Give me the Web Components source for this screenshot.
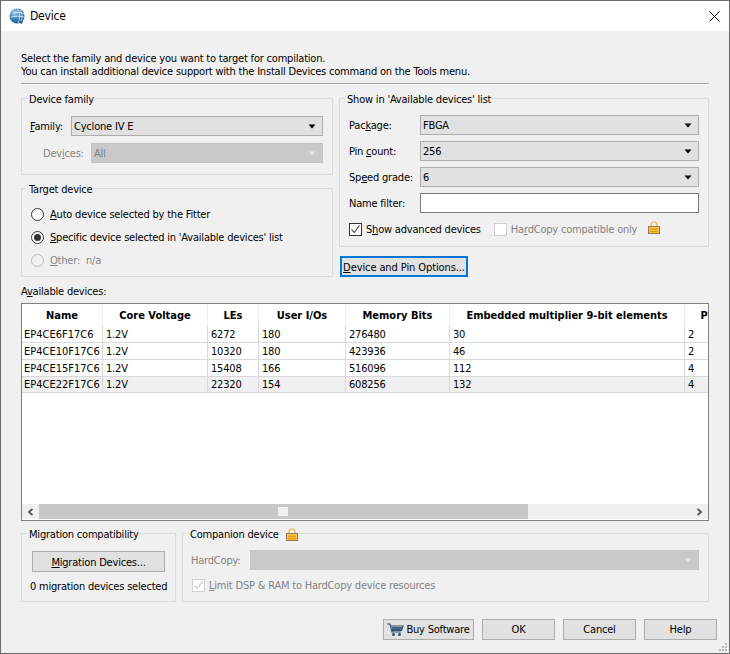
<!DOCTYPE html>
<html>
<head>
<meta charset="utf-8">
<title>Device</title>
<style>
  html, body { margin: 0; height: 100%; }
  body { font: 11px/13px "DejaVu Sans Condensed", "DejaVu Sans", sans-serif; letter-spacing: -0.2px; color: #000; background: #f0f0f0; }
</style>
</head>
<body>
<device-dialog></device-dialog>
<script>
class GroupBox extends HTMLElement {
  constructor() {
    super();
    this.attachShadow({ mode: "open" });
    this.shadowRoot.innerHTML = `
<style>
  :host { display: block; box-sizing: border-box; border: 1px solid #dcdcdc; }
  .legend { display: flex; align-items: center; gap: 7px; width: max-content; height: 13px; margin: -6px 0 0 6px; padding: 0 1px; background: #f0f0f0; }
  .body { display: flex; flex-direction: column; }
</style>
<div class="legend"><slot name="legend"></slot></div>
<div class="body"><slot></slot></div>`;
  }
}

class ComboBox extends HTMLElement {
  constructor() {
    super();
    this.attachShadow({ mode: "open" });
    this.shadowRoot.innerHTML = `
<style>
  :host { display: flex; flex: 1; align-items: center; justify-content: space-between; box-sizing: border-box; height: 20px; padding: 0 6px 0 2px; background: #e1e1e1; border: 1px solid #adadad; }
  :host([disabled]) { background: #c9c9c9; border-color: #c4c4c4; color: #7d7d7d; }
  svg { display: block; }
  path { fill: #000; }
  :host([disabled]) path { fill: #e6e6e6; }
</style>
<span><slot></slot></span><svg width="8" height="5" viewBox="0 0 8 5"><path d="M0.5 0.5H7.5L4 4.5Z"/></svg>`;
  }
}

class PushButton extends HTMLElement {
  constructor() {
    super();
    this.attachShadow({ mode: "open" });
    this.shadowRoot.innerHTML = `
<style>
  :host { display: flex; align-items: center; justify-content: center; gap: 2px; box-sizing: border-box; height: 21px; background: #e1e1e1; border: 1px solid #adadad; white-space: nowrap; }
  :host([focused]) { border: 2px solid #0078d7; padding-top: 1px; letter-spacing: -0.1px; }
</style>
<slot></slot>`;
  }
}

class RadioButton extends HTMLElement {
  constructor() {
    super();
    this.attachShadow({ mode: "open" });
    this.shadowRoot.innerHTML = `
<style>
  :host { display: flex; align-items: center; gap: 6px; height: 13px; }
  .mark { display: flex; align-items: center; justify-content: center; box-sizing: border-box; width: 13px; height: 13px; border: 1px solid #333; border-radius: 50%; background: #fff; }
  :host([disabled]) { color: #838383; }
  :host([disabled]) .mark { border-color: #bcbcbc; background: #f0f0f0; }
  .dot { display: none; width: 7px; height: 7px; border-radius: 50%; background: #333; }
  :host([checked]) .dot { display: block; }
</style>
<span class="mark"><span class="dot"></span></span><slot></slot>`;
  }
}

class CheckBox extends HTMLElement {
  constructor() {
    super();
    this.attachShadow({ mode: "open" });
    this.shadowRoot.innerHTML = `
<style>
  :host { display: flex; align-items: center; gap: 4px; height: 13px; white-space: nowrap; }
  :host([disabled]) { color: #838383; }
  .mark { box-sizing: border-box; width: 13px; height: 13px; border: 1px solid #333; background: #fff; display: block; }
  :host([disabled]) .mark { border-color: #cfcfcf; }
  path { fill: none; stroke: #333; stroke-width: 1.1; display: none; }
  :host([checked]) path { display: block; }
  :host([disabled]) path { stroke: #bcbcbc; }
</style>
<svg class="mark" viewBox="0 0 11 11"><path d="M1.5 5.5L4.2 8.5L9.5 1.5"/></svg><slot></slot>`;
  }
}

class LockIcon extends HTMLElement {
  constructor() {
    super();
    this.attachShadow({ mode: "open" });
    this.shadowRoot.innerHTML = `
<style>:host { display: block; width: 12px; height: 13px; } svg { display: block; }</style>
<svg width="12" height="13" viewBox="0 0 12 13">
  <path d="M3 6V4a3 3 0 0 1 6 0V6" fill="none" stroke="#e3c27c" stroke-width="1.6"/>
  <rect x="0.5" y="5.5" width="11" height="7" fill="#fbc94a" stroke="#8f7a55"/>
  <rect x="2" y="7.5" width="8" height="1.4" fill="#e8960f"/>
  <rect x="2" y="10" width="8" height="1.2" fill="#e8960f"/>
</svg>`;
  }
}

class DeviceTable extends HTMLElement {
  constructor() {
    super();
    this.attachShadow({ mode: "open" });
    const widths = [81, 105, 51, 87, 104, 235, 58];
    const heads = ["Name", "Core Voltage", "LEs", "User I/Os", "Memory Bits", "Embedded multiplier 9-bit elements", "PLLs"];
    const rows = [
      ["EP4CE6F17C6", "1.2V", "6272", "180", "276480", "30", "2"],
      ["EP4CE10F17C6", "1.2V", "10320", "180", "423936", "46", "2"],
      ["EP4CE15F17C6", "1.2V", "15408", "166", "516096", "112", "4"],
      ["EP4CE22F17C6", "1.2V", "22320", "154", "608256", "132", "4"],
    ];
    this.shadowRoot.innerHTML = `
<style>
  :host { display: flex; flex-direction: column; box-sizing: border-box; height: 218px; border: 1px solid #7f7f7f; background: #fff; }
  .view { flex: 1; overflow: hidden; }
  table { border-collapse: separate; border-spacing: 0; table-layout: fixed; width: 721px; }
  th { height: 22px; padding: 0; font-weight: bold; text-align: center; border-right: 1px solid #ececec; box-sizing: border-box; letter-spacing: 0; white-space: nowrap; }
  td { height: 17px; padding: 0 0 0 3px; box-sizing: border-box; border-right: 1px solid #d9d9d9; border-bottom: 1px solid #d9d9d9; white-space: nowrap; overflow: hidden; }
  td:first-child { padding-left: 2px; letter-spacing: 0; }
  tr.sel td { background: #f0f0f0; height: 16px; }
  .bar { display: flex; align-items: stretch; height: 15px; margin-bottom: 1px; background: #f0f0f0; }
  .btn { display: flex; align-items: center; justify-content: center; width: 17px; }
  .track { display: flex; align-items: center; justify-content: center; width: 489px; background: #c8c8c8; }
  .grip { width: 10px; height: 9px; margin-right: 2px; background: #f0f0f0; }
  .rest { flex: 1; }
  svg { display: block; }
</style>
<div class="view">
  <table>
    <colgroup>${widths.map(w => `<col style="width:${w}px">`).join("")}</colgroup>
    <tr>${heads.map(h => `<th>${h}</th>`).join("")}</tr>
    ${rows.map((r, i) => `<tr class="${i == 3 ? "sel" : ""}">${r.map(c => `<td>${c}</td>`).join("")}</tr>`).join("")}
  </table>
</div>
<div class="bar">
  <span class="btn"><svg width="7" height="8" viewBox="0 0 7 8"><path d="M5.5 0.8L2 4L5.5 7.2" fill="none" stroke="#505050" stroke-width="1.8"/></svg></span>
  <span class="track"><span class="grip"></span></span>
  <span class="rest"></span>
  <span class="btn"><svg width="7" height="8" viewBox="0 0 7 8"><path d="M1.5 0.8L5 4L1.5 7.2" fill="none" stroke="#505050" stroke-width="1.8"/></svg></span>
</div>`;
  }
}

class DeviceDialog extends HTMLElement {
  constructor() {
    super();
    this.attachShadow({ mode: "open" });
    this.shadowRoot.innerHTML = `
<style>
  :host { display: flex; flex-direction: column; box-sizing: border-box; height: 654px; border: 1px solid #6b6b6b; overflow: hidden; }
  .titlebar { display: flex; align-items: center; gap: 5px; flex: none; height: 30px; padding: 0 9px 0 8px; background: #fff; font-size: 12px; }
  .titlebar .name { flex: 1; }
  .content { display: flex; flex-direction: column; flex: 1; padding: 21px 20px 0; }
  .intro { padding-bottom: 5px; border-bottom: 1px solid #a0a0a0; box-shadow: 0 1px 0 #fff; white-space: nowrap; }
  .columns { display: grid; grid-template-columns: 312px 1fr; column-gap: 6px; margin-top: 14px; }
  .col { display: flex; flex-direction: column; }
  .family { height: 77px; margin-bottom: 13px; }
  .target { height: 89px; }
  .show { height: 149px; }
  .row { display: flex; align-items: center; }
  .family .row { padding: 0 9px 0 8px; }
  .family .first { margin-top: 10px; }
  .family .first span { width: 41px; }
  .family .second { margin-top: 7px; padding-left: 21px; color: #838383; }
  .family .second span { width: 48px; }
  .target .radios { display: flex; flex-direction: column; gap: 10px; padding: 12px 0 0 9px; }
  .show .row { padding: 0 9px; gap: 0; }
  .show .row + .row { margin-top: 6px; }
  .show .first { margin-top: 9px; }
  .show label { width: 71px; flex: none; }
  .input { flex: 1; box-sizing: border-box; height: 20px; background: #fff; border: 1px solid #7a7a7a; }
  .show .checks { margin-top: 10px !important; gap: 13px; }
  .show .checks lock-icon { margin: -4px 0 0 -2px; }
  .options { width: 128px; margin: 9px 0 0 1px; }
  .avail { margin-top: 8px; height: 13px; margin-bottom: 5px; }
  .bottom { display: grid; grid-template-columns: 155px 1fr; column-gap: 6px; margin-top: 12px; height: 69px; }
  .migration { display: flex; flex-direction: column; }
  .migration push-button { margin: 10px 10px 0 10px; padding-top: 1px; }
  .migration .count { margin: 8px 0 0 8px; white-space: nowrap; }
  .companion .row { padding: 0 9px 0 8px; margin-top: 9px; color: #838383; }
  .companion .row span { width: 59px; }
  .companion check-box { margin: 9px 0 0 9px; }
  .actions { display: flex; justify-content: flex-end; gap: 8px; margin: 17px -8px 0 0; }
  .actions push-button { width: 73px; }
  .actions .buy { width: 91px; }
  .grip { display: flex; justify-content: flex-end; height: 11px; margin-right: -19px; margin-top: 2px; }
  svg { display: block; }
</style>
<div class="titlebar">
  <svg width="16" height="17" viewBox="0 0 16 17">
    <defs><radialGradient id="globe" cx="0.35" cy="0.3" r="0.8"><stop offset="0" stop-color="#a9cfe8"/><stop offset="0.5" stop-color="#3f86bd"/><stop offset="1" stop-color="#164f82"/></radialGradient></defs>
    <circle cx="8" cy="8" r="7.5" fill="url(#globe)"/>
    <path d="M8 1C11 4 12 9 9 15M11 2C13 5 14 9 12 13M4 5C8 4 12 4 15 6M2 9C6 8 11 8 15 9" fill="none" stroke="#e6f2fa" stroke-width="0.8"/>
    <path d="M9 14l4 2 1-3z" fill="#2d6a9e"/>
  </svg>
  <span class="name">Device</span>
  <svg width="11" height="11" viewBox="0 0 11 11"><path d="M0.5 0.5L10.5 10.5M10.5 0.5L0.5 10.5" stroke="#000" stroke-width="1"/></svg>
</div>
<div class="content">
  <div class="intro">Select the family and device you want to target for compilation.<br>You can install additional device support with the Install Devices command on the Tools menu.</div>
  <div class="columns">
    <div class="col">
      <group-box class="family">
        <span slot="legend">Device family</span>
        <div class="row first"><span><u>F</u>amily:</span><combo-box>Cyclone IV E</combo-box></div>
        <div class="row second"><span>Dev<u>i</u>ces:</span><combo-box disabled>All</combo-box></div>
      </group-box>
      <group-box class="target">
        <span slot="legend">Target device</span>
        <div class="radios">
          <radio-button><span><u>A</u>uto device selected by the Fitter</span></radio-button>
          <radio-button checked><span><u>S</u>pecific device selected in 'Available devices' list</span></radio-button>
          <radio-button disabled><span><u>O</u>ther:&nbsp; n/a</span></radio-button>
        </div>
      </group-box>
    </div>
    <div class="col">
      <group-box class="show">
        <span slot="legend">Show in 'Available devices' list</span>
        <div class="row first"><label>Pac<u>k</u>age:</label><combo-box>FBGA</combo-box></div>
        <div class="row"><label>Pin <u>c</u>ount:</label><combo-box>256</combo-box></div>
        <div class="row"><label>Sp<u>e</u>ed grade:</label><combo-box>6</combo-box></div>
        <div class="row"><label>Name filter:</label><div class="input"></div></div>
        <div class="row checks">
          <check-box checked><span>S<u>h</u>ow advanced devices</span></check-box>
          <check-box disabled><span>Ha<u>r</u>dCopy compatible only</span></check-box>
          <lock-icon></lock-icon>
        </div>
      </group-box>
      <push-button class="options" focused><span><u>D</u>evice and Pin Options...</span></push-button>
    </div>
  </div>
  <div class="avail">A<u>v</u>ailable devices:</div>
  <device-table></device-table>
  <div class="bottom">
    <group-box>
      <span slot="legend">Migration compatibility</span>
      <div class="migration">
        <push-button><span><u>M</u>igration Devices...</span></push-button>
        <div class="count">0 migration devices selected</div>
      </div>
    </group-box>
    <group-box class="companion">
      <span slot="legend">Companion device</span><lock-icon slot="legend"></lock-icon>
      <div class="row"><span>HardCopy:</span><combo-box disabled></combo-box></div>
      <check-box checked disabled><span><u>L</u>imit DSP &amp; RAM to HardCopy device resources</span></check-box>
    </group-box>
  </div>
  <div class="actions">
    <push-button class="buy">
      <svg width="17" height="14" viewBox="0 0 17 14"><path d="M0 1h3l2 8h9M4 3h12l-1.5 4.5H5.2" fill="none" stroke="#2f4f6f" stroke-width="1.2"/><path d="M5 4h10v3H5z" fill="#3d6285"/><circle cx="6.5" cy="11.5" r="1.5" fill="#2f4f6f"/><circle cx="12.5" cy="11.5" r="1.5" fill="#2f4f6f"/></svg>
      <span>Buy Software</span>
    </push-button>
    <push-button>OK</push-button>
    <push-button>Cancel</push-button>
    <push-button>Help</push-button>
  </div>
  <div class="grip">
    <svg width="10" height="10" viewBox="0 0 10 10" fill="#b8b8b8"><rect x="7" y="1" width="2" height="2"/><rect x="4" y="4" width="2" height="2"/><rect x="7" y="4" width="2" height="2"/><rect x="1" y="7" width="2" height="2"/><rect x="4" y="7" width="2" height="2"/><rect x="7" y="7" width="2" height="2"/></svg>
  </div>
</div>`;
  }
}

customElements.define("group-box", GroupBox);
customElements.define("combo-box", ComboBox);
customElements.define("push-button", PushButton);
customElements.define("radio-button", RadioButton);
customElements.define("check-box", CheckBox);
customElements.define("lock-icon", LockIcon);
customElements.define("device-table", DeviceTable);
customElements.define("device-dialog", DeviceDialog);
</script>
</body>
</html>
